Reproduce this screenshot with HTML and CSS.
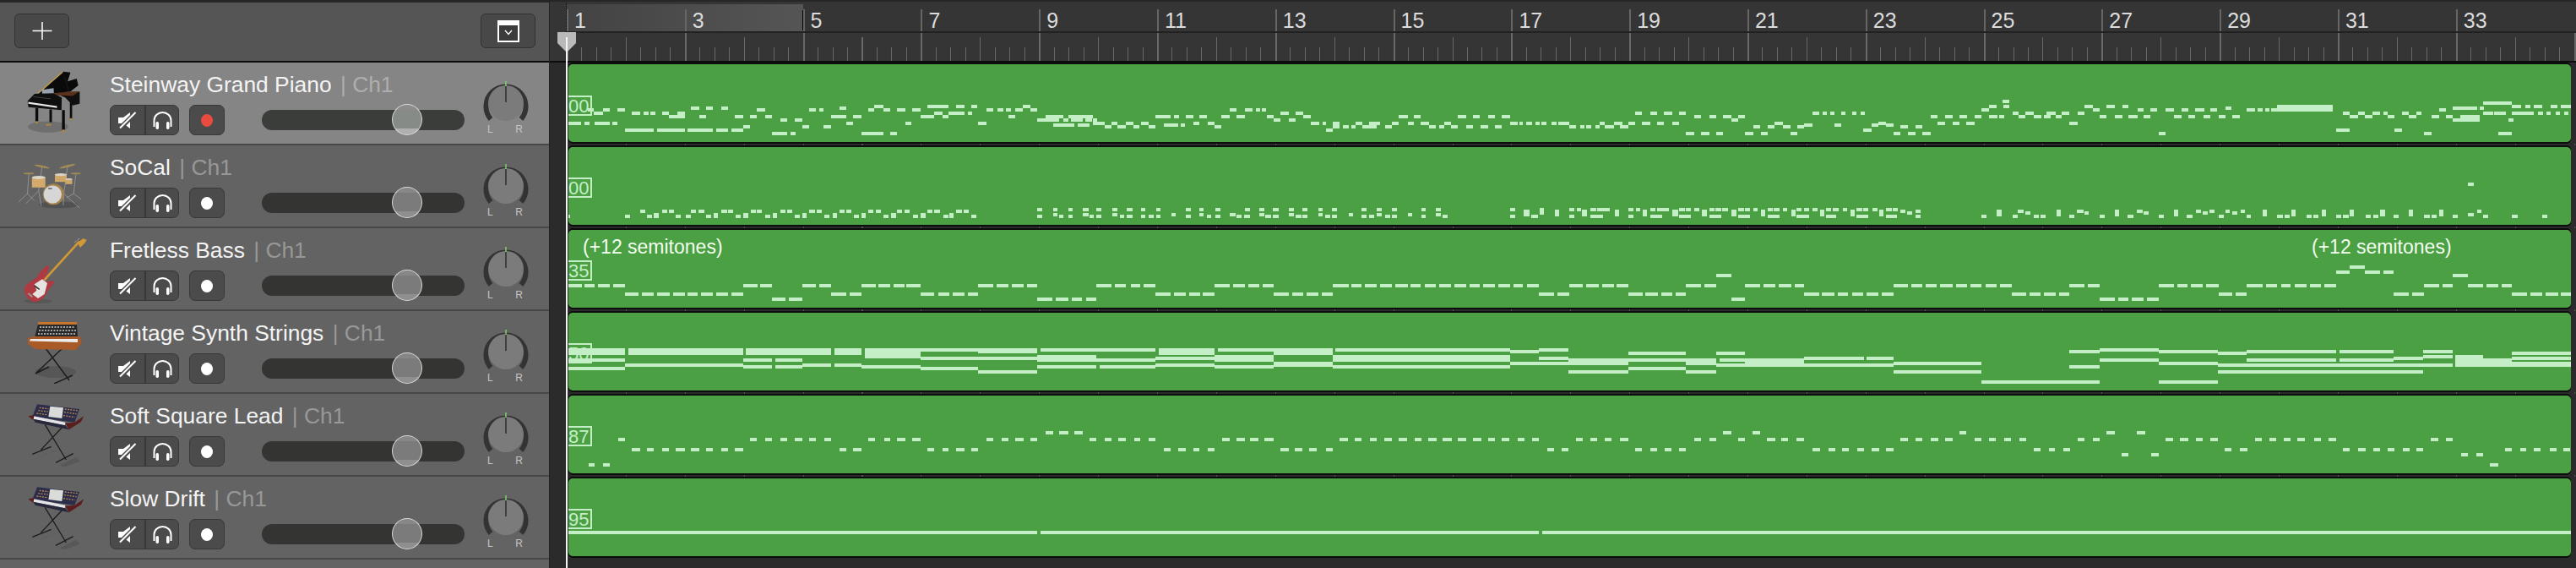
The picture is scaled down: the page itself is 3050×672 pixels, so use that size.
FILE: index.html
```html
<!DOCTYPE html>
<html lang="en">
<head>
    <meta charset="UTF-8">
    <title>Tracks</title>
    <link rel="stylesheet" href="styles.css">
</head>
<body>
    <svg class="sprite">
        <symbol id="i-mute" viewBox="0 0 22 21">
            <path class="ink" d="M0 7H6L14 1V20L6 14H0Z"/>
            <path class="gap" d="M1 21L22 0"/>
            <path class="line" d="M2 19.500L20.500 1"/>
        </symbol>
        <symbol id="i-solo" viewBox="0 0 23 21">
            <path class="line" d="M1.500 18V10.500a10 9.500 0 0 1 20 0V18"/>
            <rect class="ink" x="3.500" y="12" width="3.500" height="9" rx="1.700"/>
            <rect class="ink" x="16" y="12" width="3.500" height="9" rx="1.700"/>
        </symbol>
        <symbol id="i-pan" viewBox="0 0 54 52">
            <path class="pan-arc" d="M9 45A23.500 23.500 0 1 1 45 45"/>
            <circle class="pan-disc" cx="27" cy="26" r="21"/>
            <path class="pan-top" d="M27 0V6"/>
            <path class="pan-hand" d="M27 6V25"/>
        </symbol>
        <symbol id="i-synth" viewBox="0 0 270 270">
            <path d="M85 215L125 195L150 190L100 205ZM150 245L210 215L225 230L170 250Z" fill="#000" opacity=".1"/>
            <path d="M100 100L175 225M165 105L85 190M55 205L122 178M138 235L200 203" fill="none" stroke="#1c1c1c" stroke-width="4"/>
            <path d="M72 28L222 45L205 92L55 72Z" fill="#2c2d4a"/>
            <path d="M118 35L165 40L160 78L112 72Z" fill="#d9dcd8"/>
            <path d="M80 40L112 44M76 50L110 54M70 60L108 65M170 45L215 50M168 56L212 62M165 68L206 74" stroke="#b8864a" stroke-width="4" stroke-dasharray="6 4"/>
            <path d="M60 70L172 92L170 103L58 80Z" fill="#e4e4e8"/>
            <path d="M40 70L62 66L58 84Z" fill="#5a2020"/>
            <path d="M172 95L205 92L238 70L228 90L185 118Z" fill="#5b1e1c"/>
            <path d="M58 80L172 103L185 118L65 92Z" fill="#28283c"/>
        </symbol>
    </svg>

    <div class="app">
        <aside class="panel">
            <header class="panel-head">
                <button class="head-btn">
                    <svg class="head-plus" viewBox="0 0 24 22"><path d="M0 11H24M12 0V22"/></svg>
                </button>
                <button class="head-btn">
                    <svg class="head-win" viewBox="0 0 26 26">
                        <path class="win-body" d="M1 1H25V25H1Z"/>
                        <path class="win-bar" d="M0 0H26V6H0Z"/>
                        <path class="win-arrow" d="M9 12L13 16.500L17 12"/>
                    </svg>
                </button>
            </header>

            <div class="track selected">
                <div class="track-icon">
                    <svg class="icon-piano" viewBox="90 70 200 235">
                        <ellipse cx="170" cy="272" rx="72" ry="20" fill="#000" opacity=".16"/>
                        <path d="M125 205h10v48h-10zM175 210h9v45h-9zM220 212h10v72h-10zM248 185h8v58h-8z" fill="#0b0b0b"/>
                        <path d="M126 252h8v8h-8zM221 282h8v10h-8zM249 241h7v7h-7zM162 262h20v5h-20z" fill="#b08a3c"/>
                        <path d="M190 150L283 147V190L258 196L232 168Z" fill="#0f0f0f"/>
                        <path d="M185 148L282 146L258 162L205 160Z" fill="#5a3018"/>
                        <path d="M135 155L225 75L250 78L240 110L272 100L278 124L250 146L190 152Z" fill="#0a0a0a"/>
                        <path d="M135 152L222 77" stroke="#c39b45" stroke-width="4"/>
                        <path d="M228 90L245 148" stroke="#222" stroke-width="2"/>
                        <path d="M148 140L190 134L191 157L150 159Z" fill="#98a2ae"/>
                        <path d="M97 180L122 154L190 152L219 168L218 212L100 202Z" fill="#0e0e0e"/>
                        <path d="M99 183L202 198L202 205L100 190Z" fill="#e6e6e6"/>
                        <path d="M118 165L180 172" stroke="#555" stroke-width="2"/>
                    </svg>
                </div>
                <div class="track-main">
                    <div class="track-name">Steinway Grand Piano <span class="track-ch">| Ch1</span></div>
                    <div class="track-controls">
                        <div class="btn-group">
                            <div class="ctl-btn"><svg class="ic-mute"><use href="#i-mute"/></svg></div>
                            <div class="ctl-btn"><svg class="ic-solo"><use href="#i-solo"/></svg></div>
                        </div>
                        <div class="rec-btn"><span class="rec-dot on"></span></div>
                        <div class="fader"><span class="fader-thumb"></span></div>
                    </div>
                </div>
                <div class="pan">
                    <svg class="pan-knob"><use href="#i-pan"/></svg>
                    <div class="pan-labels"><span>L</span><span>R</span></div>
                </div>
            </div>

            <div class="track">
                <div class="track-icon">
                    <svg class="icon-drums" viewBox="70 395 240 175">
                        <ellipse cx="220" cy="550" rx="70" ry="12" fill="#000" opacity=".18"/>
                        <path d="M162 415L150 500L105 545M150 500L160 556M253 415L240 510L295 560M240 510L238 552M115 440L110 510L78 540M110 510L135 535M283 440L275 510L250 525M275 510L302 530" fill="none" stroke="#a8a8a8" stroke-width="2"/>
                        <ellipse cx="162" cy="413" rx="28" ry="4" fill="#a28c55" transform="rotate(12 162 413)"/>
                        <ellipse cx="253" cy="412" rx="29" ry="4" fill="#a28c55" transform="rotate(-14 253 412)"/>
                        <ellipse cx="115" cy="438" rx="19" ry="3" fill="#a28c55"/>
                        <ellipse cx="283" cy="438" rx="18" ry="3" fill="#a28c55"/>
                        <path d="M126 452h48v36h-48z" fill="#d3aa6c"/>
                        <ellipse cx="150" cy="452" rx="24" ry="6" fill="#d8d4c8"/>
                        <path d="M208 442h42v26h-42z" fill="#cfa76a"/>
                        <ellipse cx="229" cy="442" rx="21" ry="5" fill="#d8d4c8"/>
                        <path d="M246 458h24v18h-24z" fill="#cfa76a"/>
                        <ellipse cx="258" cy="458" rx="12" ry="3" fill="#d8d4c8"/>
                        <circle cx="203" cy="512" r="38" fill="#a3824c"/>
                        <circle cx="200" cy="513" r="32" fill="#d6d6d6"/>
                        <path d="M184 492h14" stroke="#555" stroke-width="4"/>
                    </svg>
                </div>
                <div class="track-main">
                    <div class="track-name">SoCal <span class="track-ch">| Ch1</span></div>
                    <div class="track-controls">
                        <div class="btn-group">
                            <div class="ctl-btn"><svg class="ic-mute"><use href="#i-mute"/></svg></div>
                            <div class="ctl-btn"><svg class="ic-solo"><use href="#i-solo"/></svg></div>
                        </div>
                        <div class="rec-btn"><span class="rec-dot"></span></div>
                        <div class="fader"><span class="fader-thumb"></span></div>
                    </div>
                </div>
                <div class="pan">
                    <svg class="pan-knob"><use href="#i-pan"/></svg>
                    <div class="pan-labels"><span>L</span><span>R</span></div>
                </div>
            </div>

            <div class="track">
                <div class="track-icon">
                    <svg class="icon-bass" viewBox="0 0 270 270">
                        <ellipse cx="75" cy="250" rx="50" ry="8" fill="#000" opacity=".12"/>
                        <path d="M112 124C100 128 85 140 75 160C65 175 40 180 28 200C22 220 35 245 60 252C75 255 100 240 108 215C115 205 130 190 134 182L125 178L100 180C102 165 110 145 115 130Z" fill="#b03a42"/>
                        <path d="M62 190L90 172L108 186L98 225L75 240L55 225L70 212Z" fill="#e6e2e0"/>
                        <path d="M62 195L80 208" stroke="#333" stroke-width="5"/>
                        <path d="M40 222L55 235" stroke="#999" stroke-width="6"/>
                        <path d="M97 175L222 38" stroke="#cf9a35" stroke-width="8"/>
                        <path d="M215 42L235 28L248 32L240 45L225 60Z" fill="#d09a35"/>
                        <path d="M205 42L212 35M215 34L222 27" stroke="#aaa" stroke-width="3"/>
                    </svg>
                </div>
                <div class="track-main">
                    <div class="track-name">Fretless Bass <span class="track-ch">| Ch1</span></div>
                    <div class="track-controls">
                        <div class="btn-group">
                            <div class="ctl-btn"><svg class="ic-mute"><use href="#i-mute"/></svg></div>
                            <div class="ctl-btn"><svg class="ic-solo"><use href="#i-solo"/></svg></div>
                        </div>
                        <div class="rec-btn"><span class="rec-dot"></span></div>
                        <div class="fader"><span class="fader-thumb"></span></div>
                    </div>
                </div>
                <div class="pan">
                    <svg class="pan-knob"><use href="#i-pan"/></svg>
                    <div class="pan-labels"><span>L</span><span>R</span></div>
                </div>
            </div>

            <div class="track">
                <div class="track-icon">
                    <svg class="icon-vintage" viewBox="0 0 70 76">
                        <ellipse cx="36" cy="62" rx="24" ry="7" fill="#000" opacity=".13"/>
                        <path d="M24 34L52 72M44 34L12 64M12 64L28 56M34 76L56 66" fill="none" stroke="#1d1d1d" stroke-width="1.500"/>
                        <path d="M15 3H61V6H15Z" fill="#c8752e"/>
                        <path d="M15 6H61L62 21H11Z" fill="#26272a"/>
                        <path d="M17 9h42M16 13h44M15 17h45" stroke="#a8a8a0" stroke-width="1.800" stroke-dasharray="2 1.500"/>
                        <path d="M3 22L11 20H64L67 27L60 36L12 35L3 29Z" fill="#a95a26"/>
                        <path d="M6 23H62L62 27L5 25.500Z" fill="#ececec"/>
                    </svg>
                </div>
                <div class="track-main">
                    <div class="track-name">Vintage Synth Strings <span class="track-ch">| Ch1</span></div>
                    <div class="track-controls">
                        <div class="btn-group">
                            <div class="ctl-btn"><svg class="ic-mute"><use href="#i-mute"/></svg></div>
                            <div class="ctl-btn"><svg class="ic-solo"><use href="#i-solo"/></svg></div>
                        </div>
                        <div class="rec-btn"><span class="rec-dot"></span></div>
                        <div class="fader"><span class="fader-thumb"></span></div>
                    </div>
                </div>
                <div class="pan">
                    <svg class="pan-knob"><use href="#i-pan"/></svg>
                    <div class="pan-labels"><span>L</span><span>R</span></div>
                </div>
            </div>

            <div class="track">
                <div class="track-icon">
                    <svg class="icon-synth"><use href="#i-synth"/></svg>
                </div>
                <div class="track-main">
                    <div class="track-name">Soft Square Lead <span class="track-ch">| Ch1</span></div>
                    <div class="track-controls">
                        <div class="btn-group">
                            <div class="ctl-btn"><svg class="ic-mute"><use href="#i-mute"/></svg></div>
                            <div class="ctl-btn"><svg class="ic-solo"><use href="#i-solo"/></svg></div>
                        </div>
                        <div class="rec-btn"><span class="rec-dot"></span></div>
                        <div class="fader"><span class="fader-thumb"></span></div>
                    </div>
                </div>
                <div class="pan">
                    <svg class="pan-knob"><use href="#i-pan"/></svg>
                    <div class="pan-labels"><span>L</span><span>R</span></div>
                </div>
            </div>

            <div class="track">
                <div class="track-icon">
                    <svg class="icon-synth"><use href="#i-synth"/></svg>
                </div>
                <div class="track-main">
                    <div class="track-name">Slow Drift <span class="track-ch">| Ch1</span></div>
                    <div class="track-controls">
                        <div class="btn-group">
                            <div class="ctl-btn"><svg class="ic-mute"><use href="#i-mute"/></svg></div>
                            <div class="ctl-btn"><svg class="ic-solo"><use href="#i-solo"/></svg></div>
                        </div>
                        <div class="rec-btn"><span class="rec-dot"></span></div>
                        <div class="fader"><span class="fader-thumb"></span></div>
                    </div>
                </div>
                <div class="pan">
                    <svg class="pan-knob"><use href="#i-pan"/></svg>
                    <div class="pan-labels"><span>L</span><span>R</span></div>
                </div>
            </div>
        </aside>

        <main class="arrange">
            <div class="ruler">
                <div class="ruler-bars">
                    <span class="bar">1</span><span class="bar">3</span><span class="bar">5</span><span class="bar">7</span><span class="bar">9</span><span class="bar">11</span><span class="bar">13</span><span class="bar">15</span><span class="bar">17</span><span class="bar">19</span><span class="bar">21</span><span class="bar">23</span><span class="bar">25</span><span class="bar">27</span><span class="bar">29</span><span class="bar">31</span><span class="bar">33</span>
                </div>
                <div class="ruler-ticks"></div>
            </div>

            <div class="lane">
                <div class="region">
                    <svg class="notes" viewBox="673 76 2371 92">
                        <path class="p1" d="M70 390h15M85 402h20M105 390h17M140 390h17M172 402h20M200 402h12M215 402h12M243 402h15M258 414h20M278 402h17M278 414h17M310 384h20M345 384h15M380 384h16M330 414h15M412 414h20M447 414h16M482 414h16M463 390h19M517 426h16M550 426h18M568 450h16M618 450h17M584 390h16M607 390h11M655 384h15M635 414h35M686 414h20M670 438h16M498 474h35M540 474h12M706 474h51M772 474h16M721 390h14M735 378h22M757 390h15M788 390h20M823 390h20M858 378h50M925 378h20M960 378h15M843 414h31M874 402h20M894 414h14M908 402h37M953 402h10M807 438h15M976 438h20M996 390h16M1022 390h12M1040 390h12M1062 390h18M1080 378h17M1097 390h16M1047 414h15M1113 426h52M1133 414h42M1175 426h10M1185 414h58M1192 426h28M1225 426h15M1243 426h10M1150 444h50M1207 444h28M1243 438h15M1258 438h12M1270 450h15M1285 438h15M1300 450h20M1320 438h17M1337 450h13M1355 438h17M1372 450h16M1407 444h33M1447 444h10M1475 438h15M1510 438h15M1525 450h15M1388 414h35M1430 414h13M1458 414h17M1490 414h18M1540 414h20M1560 390h8M26 438h29M62 438h12M86 438h36M128 438h12M157 462h66M231 462h64M302 462h58M368 462h28M404 462h28M432 450h15"/>
                        <path class="p4" d="M0 390h8M28 390h17M52 390h10M66 390h11M8 414h19M78 414h16M94 426h16M110 402h20M130 426h15M145 402h17M162 414h18M180 438h20M207 438h8M215 462h16M231 438h15M231 450h15M255 450h13M275 450h10M285 438h15M300 450h33M315 438h18M333 438h9M352 450h16M368 438h16M384 414h21M420 414h16M405 438h15M436 438h19M455 450h15M478 450h12M490 438h15M505 450h16M541 450h16M575 450h17M608 450h15M521 414h20M557 414h15M592 414h16M623 414h20M643 438h17M664 438h9M680 438h14M702 438h10M716 438h12M738 438h12M755 438h25M780 450h16M805 450h11M820 450h12M840 450h10M850 438h13M863 450h20M883 438h20M897 450h20M917 438h16M949 438h19M984 438h16M1019 438h16M933 402h16M968 402h16M1000 402h19M1035 402h16M1070 414h15M1105 414h17M1137 414h19M1156 426h16M1172 414h16M1051 474h19M1086 474h19M1122 474h15M1188 474h19M1225 474h15M1294 474h15M1207 450h16M1240 450h17M1257 438h18M1275 450h18M1310 450h15M1325 444h20M1345 402h15M1368 402h10M1385 402h10M1411 402h10M1436 402h10M1456 402h10M1396 444h15M1462 462h20M1482 444h15M1497 438h18M1515 444h18M1533 474h16"/>
                        <path class="p5" d="M0 450h17M35 450h15M17 474h18M50 474h21M71 414h16M103 414h19M138 414h17M172 414h16M86 438h17M122 438h15M153 438h19M188 390h17M205 378h18M205 414h20M230 414h12M240 378h12M238 360h14M260 402h15M275 414h15M290 402h20M310 414h17M340 402h20M333 414h15M360 414h15M375 402h17M412 402h16M392 438h20M428 378h18M446 390h17M463 414h15M478 378h20M498 414h17M515 378h15M530 414h20M550 390h15M565 414h15M580 390h16M615 390h20M635 414h17M652 390h16M668 414h17M685 390h20M703 414h17M720 390h15M738 414h16M754 384h14M770 414h18M804 390h20M830 390h10M846 390h10M860 390h14M874 378h130M874 390h130M600 474h15M1011 462h32M1028 402h15M1043 414h19M1062 402h16M1078 414h17M1095 402h18M1122 402h8M1130 414h16M1146 462h19M1165 402h15M1180 414h17M1197 402h13M1215 474h17M1232 414h18M1250 390h16M1266 414h16M1282 384h56M1282 426h18M1300 414h45M1300 426h45M1345 384h10M1352 366h68M1352 402h23M1378 402h27M1388 474h32M1412 426h10M1420 402h50M1420 378h20M1450 378h12M1470 378h20M1480 402h12M1500 402h10M1510 378h15M1520 402h10M1533 378h24M1540 402h10"/>
                    </svg>
                    <span class="region-num first">00</span>
                </div>
            </div>

            <div class="lane">
                <div class="region">
                    <svg class="notes" viewBox="673 174 2371 92">
                        <path class="p2" d="M26 258h4M157 258h12M192 240h12M208 258h12M223 252h12M223 258h12M243 240h12M258 240h12M275 258h12M298 258h12M310 240h12M327 240h14M345 258h12M362 252h10M362 258h10M380 240h13M396 240h12M413 258h12M432 252h10M432 258h10M448 240h12M463 240h12M482 258h12M500 252h10M500 258h10M517 240h12M533 240h12M550 258h12M568 252h10M568 258h10M585 240h12M601 240h12M620 258h12M638 252h10M638 258h10M655 240h12M670 240h12M688 258h12M706 252h10M706 258h10M722 240h12M738 240h12M757 258h12M775 252h10M775 258h10M788 240h12M806 240h12M825 258h12M843 252h12M843 258h12M859 240h12M875 240h12M895 258h12M910 252h10M910 258h10M926 240h12M942 240h12M960 258h12M1113 234h12M1113 258h12M1150 234h10M1150 252h10M1165 258h10M1185 234h11M1185 258h11M1220 234h12M1220 252h12M1235 258h10M1250 234h12M1250 258h12M1288 234h12M1288 252h12M1305 258h10M1322 234h12M1322 258h12M1355 234h10M1355 258h10M1372 258h12M1390 234h10M1390 258h10M1425 252h10M1458 234h12M1458 258h12M1490 234h10M1490 252h10M1508 258h10M1526 234h12M1526 258h12M1560 252h8"/>
                        <path class="p4" d="M0 762h5M8 768h12M25 768h15M28 744h12M60 744h12M60 762h12M75 768h13M92 744h13M92 768h13M130 744h12M130 762h12M145 768h13M160 744h12M160 768h12M197 744h11M197 762h11M213 768h12M230 744h12M230 768h12M268 762h10M298 744h12M298 768h12M315 768h12M333 744h12M333 762h12M352 768h13M368 744h12M368 768h12M405 762h10M437 744h10M437 768h10M470 744h12M470 762h12M487 768h11M643 744h12M643 768h12M675 750h12M675 762h12M692 768h16M712 744h10M712 756h10M746 750h11M746 762h11M780 744h12M780 768h12M798 744h10M810 750h12M810 762h12M830 744h12M830 768h28M845 744h15M860 744h15M885 750h10M885 762h10M917 744h13M917 768h13M935 744h10M950 750h10M950 762h10M968 744h12M968 768h27M983 744h14M997 744h15M1020 750h12M1020 762h12M1035 744h13M1035 768h27M1050 744h12M1070 744h12M1088 750h12M1088 762h12M1105 744h13M1105 768h27M1120 744h12M1135 744h13M1157 750h11M1157 762h11M1172 744h13M1172 768h28M1187 744h13M1207 744h11M1225 750h10M1225 762h10M1240 744h12M1240 768h28M1255 744h13M1275 744h10M1295 750h10M1295 762h10M1308 744h12M1308 768h28M1325 744h11M1345 744h12M1362 750h10M1362 762h10M1375 744h13M1375 768h25M1392 744h13M1415 744h10M1432 750h10M1432 762h10M1447 744h13M1447 768h26M1462 744h11M1483 744h12M1500 750h10M1500 762h10M1515 744h13M1515 768h25M1530 744h12"/>
                        <path class="p5" d="M0 750h12M15 756h12M35 750h12M35 768h12M188 768h12M223 750h12M223 762h12M260 768h12M272 750h15M290 756h12M310 768h12M325 768h12M362 750h10M362 762h10M392 768h12M410 750h15M428 756h10M463 768h12M498 750h10M498 762h10M528 768h12M548 750h14M565 756h12M600 768h12M635 750h10M635 762h10M665 768h13M686 750h12M702 756h12M718 750h12M738 768h12M755 750h10M770 756h12M790 750h10M804 768h10M840 750h10M840 762h10M874 768h14M892 768h12M908 750h10M908 762h10M943 768h12M958 768h12M978 750h10M978 762h10M1012 768h12M1028 768h12M1043 750h10M1043 762h10M1080 768h12M1098 768h12M1113 750h12M1113 762h12M1145 768h12M1180 750h10M1180 762h10M1215 768h13M1233 768h12M1250 750h10M1250 762h10M1282 768h12M1318 762h12M1338 750h10M1352 768h12M1420 768h12M1490 768h12M1318 654h12"/>
                    </svg>
                    <span class="region-num">00</span>
                </div>
            </div>

            <div class="lane">
                <div class="region">
                    <svg class="notes" viewBox="673 272 2371 92">
                        <path class="p2" d="M26 504h30M62 504h24M94 504h28M130 504h27M431 504h34M470 504h28M568 504h32M607 504h28M706 504h32M745 504h27M780 504h25M810 504h33M976 504h36M1020 504h26M1054 504h28M1090 504h23M1250 504h35M1293 504h27M1330 504h22M1360 504h28M1525 504h35M157 534h31M196 534h27M231 534h29M268 534h27M302 534h23M333 534h27M368 534h27M404 534h28M635 534h35M678 534h28M843 534h32M883 534h27M918 534h27M953 534h23M1388 534h35M1431 534h27M1467 534h25M1498 534h27M498 552h32M538 552h30M1113 552h35M1156 552h29M1193 552h25M1227 552h23"/>
                        <path class="p4" d="M0 1014h28M35 1014h25M68 1014h26M231 1014h37M275 1014h23M306 1014h27M341 1014h27M376 1014h29M412 1014h24M444 1014h26M478 1014h27M514 1014h27M549 1014h23M580 1014h28M615 1014h28M651 1014h22M682 1014h28M780 1014h32M820 1014h28M856 1014h27M890 1014h27M1051 1014h35M1094 1014h27M1188 1014h35M1231 1014h27M1266 1014h30M1304 1014h21M1533 1014h16M94 1044h36M137 1044h25M170 1044h27M205 1044h26M710 1044h35M753 1044h27M917 1044h33M957 1044h28M993 1044h27M1027 1044h24M1325 1044h35M1367 1044h29M1404 1044h23M1436 1044h26M1470 1044h27M1505 1044h28M1121 978h35M1156 1062h32"/>
                        <path class="p5" d="M0 1014h18M25 1014h25M58 1014h27M93 1014h29M130 1014h25M163 1014h25M197 1014h26M232 1014h27M392 1014h36M436 1014h27M600 1014h35M643 1014h24M675 1014h27M710 1014h28M804 1014h36M848 1014h27M883 1014h23M915 1014h27M950 1014h26M984 1014h27M1215 1014h35M1258 1014h24M1318 1014h34M1360 1014h28M1395 1014h25M259 1044h33M300 1044h25M333 1044h28M369 1044h23M738 1044h32M778 1044h26M1145 1044h35M1188 1044h27M1420 1044h35M1462 1044h28M1498 1044h28M1532 1044h25M463 1062h34M505 1062h25M538 1062h27M573 1062h27M1011 966h32M1078 966h35M1121 966h24M1043 948h35M1282 978h36"/>
                    </svg>
                    <span class="region-text">(+12 semitones)</span>
                    <span class="region-text late">(+12 semitones)</span>
                    <span class="region-num">35</span>
                </div>
            </div>

            <div class="lane">
                <div class="region">
                    <svg class="notes" viewBox="673 370 2371 92">
                        <path class="p3" d="M26 132h131M26 144h131M165 132h266M165 144h266M438 132h197M438 144h197M643 132h63M643 144h63M713 132h130M713 144h130M713 156h130M843 132h133M976 132h137M976 138h137M1121 132h267M1395 132h130M1395 144h130M1533 132h35M843 162h270M1113 156h137M1113 168h137M1250 168h138M1388 162h137M1525 156h43M1525 168h43M26 168h131M431 168h67M506 168h62M157 186h274M568 186h67M643 186h63M1388 186h137M1113 192h137M1258 192h130M1525 192h43M431 192h67M506 192h62M706 192h137M26 198h131M843 198h133M976 210h137"/>
                        <path class="p6" d="M0 132h47M47 132h69M47 144h69M119 132h204M323 138h34M357 132h35M462 144h67M564 144h34M0 156h47M0 168h47M116 156h207M116 168h207M47 180h69M47 186h69M0 192h47M116 192h207M323 180h69M357 162h35M392 168h70M392 180h70M462 168h67M529 168h35M529 180h35M568 168h30M598 168h69M598 180h69M564 186h103M667 162h70M740 162h31M667 186h104M771 180h103M462 198h67M392 210h70M529 210h35M771 210h103M874 246h138M1081 246h69M976 138h36M1012 132h69M1081 138h69M1150 144h33M1183 138h105M1292 138h63M1390 138h34M1493 144h69M1390 156h34M1355 162h35M1427 156h33M1427 168h33M1460 168h33M1493 162h69M1012 168h69M1183 168h105M1292 168h63M976 192h36M1081 180h69M1150 186h274M1427 180h135M1427 186h135M1150 210h240"/>
                    </svg>
                    <span class="region-num">50</span>
                </div>
            </div>

            <div class="lane">
                <div class="region">
                    <svg class="notes" viewBox="673 468 2371 92">
                        <path class="p3" d="M72 540h14M106 540h16M142 450h15M447 450h16M482 450h16M517 450h16M550 450h18M585 450h15M620 450h15M721 450h16M758 450h14M788 450h20M823 450h20M996 450h16M1031 450h15M1062 450h20M1098 450h15M1235 450h15M1270 450h15M1301 450h19M1338 450h14M1372 450h16M1542 450h18M172 486h20M207 486h16M243 486h15M274 486h21M310 486h19M345 486h15M380 486h16M412 486h19M655 486h15M686 486h20M858 486h17M894 486h14M925 486h20M960 486h16M1407 486h16M1440 486h18M1475 486h15M1510 486h15M1133 426h17M1165 426h20M1200 426h19"/>
                        <path class="p6" d="M4 450h10M20 450h10M36 450h11M124 450h10M142 450h8M160 450h8M177 450h8M193 450h10M212 450h8M228 450h10M245 450h10M262 450h10M280 450h10M298 450h8M314 450h8M332 450h8M349 450h8M400 450h8M417 450h8M434 450h8M452 450h10M538 450h8M556 450h8M590 450h8M623 450h10M640 450h8M658 450h9M779 450h9M797 450h8M815 450h8M831 450h9M866 450h8M883 450h8M900 450h8M918 450h8M986 450h8M1004 450h8M1089 450h9M1106 450h9M1124 450h8M1141 450h9M1193 450h8M1210 450h8M1227 450h8M1243 450h8M1262 450h8M1279 450h9M1398 450h9M1416 450h8M55 486h10M72 486h9M89 486h9M108 486h8M367 486h8M384 486h8M469 486h8M487 486h8M504 486h8M521 486h8M677 486h8M695 486h8M711 486h8M729 486h8M746 486h8M762 486h9M935 486h8M953 486h7M969 486h8M1158 486h8M1176 486h8M1296 486h8M1314 486h8M1331 486h8M1348 486h8M1366 486h8M1382 486h8M1485 486h8M1503 486h7M1519 486h8M1537 486h8M1553 486h8M572 426h10M607 426h8M848 426h8M1020 426h10M1055 426h10M1037 504h8M1072 504h9M1434 504h8M1452 504h8M1467 540h10"/>
                    </svg>
                    <span class="region-num">87</span>
                </div>
            </div>

            <div class="lane">
                <div class="region">
                    <svg class="notes" viewBox="673 566 2371 92">
                        <path class="p3" d="M26 780h1087M1121 780h447"/>
                        <path class="p6" d="M0 780h357M361 780h1201"/>
                    </svg>
                    <span class="region-num">95</span>
                </div>
            </div>
        </main>

        <svg class="playhead-cap" viewBox="0 0 24 24"><path d="M1 0H23V13L12 24L1 13Z"/></svg>
        <div class="playhead-dots"></div>
        <div class="playhead"></div>
    </div>
</body>
</html>
```

FILE: styles.css
```css
* {
    box-sizing: border-box;
    margin: 0;
    padding: 0;
    font-family: "Liberation Sans", Arial, sans-serif;
}

body {
    background-color: #2b2b2b;
    overflow: hidden;
}

.sprite {
    display: none;
}

.app {
    position: relative;
    display: flex;
    width: 3050px;
    height: 672px;
}

/* Left column */
.panel {
    width: 651px;
    flex-shrink: 0;
    background: #636363;
    border-right: 1px solid #222;
}

.panel-head {
    display: flex;
    justify-content: space-between;
    align-items: center;
    height: 74px;
    padding: 0 16px 2px 17px;
    background: #555;
    border-top: 3px solid #262626;
    border-bottom: 2px solid #0c0c0c;
}

.head-btn {
    display: flex;
    justify-content: center;
    align-items: center;
    width: 65px;
    height: 41px;
    background: #484848;
    border: 1px solid #333;
    border-radius: 6px;
}

.head-plus {
    width: 24px;
    height: 21px;
    fill: none;
    stroke: #fff;
    stroke-width: 1.6;
}

.head-win {
    width: 26px;
    height: 26px;
}

.win-body {
    fill: #3b3b3b;
    stroke: #fff;
    stroke-width: 2;
}

.win-bar {
    fill: #fff;
}

.win-arrow {
    fill: none;
    stroke: #fff;
    stroke-width: 1.3;
}

.track {
    display: flex;
    height: 98px;
    background: #636363;
    border-bottom: 2px solid #474747;
}

.track.selected {
    background: #858585;
}

.track-icon {
    display: flex;
    justify-content: center;
    align-items: center;
    width: 130px;
    padding: 0 30px 0 26px;
    flex-shrink: 0;
}

.icon-piano {
    width: 67px;
    height: 78px;
    flex-shrink: 0;
}

.icon-drums {
    width: 80px;
    height: 58px;
    flex-shrink: 0;
    margin-left: -8px;
}

.icon-bass,
.icon-synth {
    width: 90px;
    height: 90px;
    flex-shrink: 0;
    margin-left: 4px;
}

.icon-vintage {
    width: 70px;
    height: 76px;
    flex-shrink: 0;
    margin-left: 4px;
}

.track-main {
    width: 420px;
    flex-shrink: 0;
}

.track-name {
    height: 50px;
    padding-top: 11px;
    font-size: 26.400px;
    line-height: 30px;
    color: #f4f4f4;
    white-space: nowrap;
}

.track-ch {
    color: rgba(255, 255, 255, 0.35);
    margin-left: 3px;
}

.track-controls {
    display: flex;
    align-items: center;
    height: 36px;
}

.btn-group {
    display: flex;
    width: 82px;
    height: 36px;
    background: #4b4b4b;
    border: 1px solid #383838;
    border-radius: 7px;
}

.ctl-btn {
    display: flex;
    justify-content: center;
    align-items: center;
    width: 50%;
}

.ctl-btn + .ctl-btn {
    border-left: 2px solid #383838;
}

.ic-mute {
    width: 22px;
    height: 21px;
}

.ic-solo {
    width: 23px;
    height: 21px;
}

.ink {
    fill: #fff;
}

.line {
    fill: none;
    stroke: #fff;
    stroke-width: 2;
}

.gap {
    fill: none;
    stroke: #4b4b4b;
    stroke-width: 5.5;
}

.rec-btn {
    display: flex;
    justify-content: center;
    align-items: center;
    width: 42px;
    height: 36px;
    margin-left: 12px;
    background: #4b4b4b;
    border: 1px solid #383838;
    border-radius: 7px;
}

.rec-dot {
    width: 14px;
    height: 15px;
    background: #fff;
    border-radius: 50%;
}

.rec-dot.on {
    background: #ea4b3f;
}

.fader {
    position: relative;
    width: 240px;
    height: 24px;
    margin-left: 44px;
    background: #343432;
    border-radius: 12px;
}

.selected .fader {
    background: #3b3d3a;
}

.fader-thumb {
    position: absolute;
    left: 154px;
    top: -7px;
    width: 36px;
    height: 37px;
    border: 1px solid #d8d8d8;
    border-radius: 50%;
    background: linear-gradient(#878787 0 18%, #7b7b7b 18% 80%, #8f8f8f 80%);
}

.selected .fader-thumb {
    background: linear-gradient(#8c8c8c 0 18%, #878b87 18% 80%, #b0b0b0 80%);
}

.pan {
    width: 54px;
    margin-left: 22px;
    padding-top: 22px;
    flex-shrink: 0;
}

.pan-knob {
    display: block;
    width: 54px;
    height: 52px;
    overflow: hidden;
}

.pan-arc {
    fill: none;
    stroke: #333;
    stroke-width: 6;
}

.selected .pan-arc {
    stroke: #3c3c3c;
}

.pan-disc {
    fill: #7b7b7b;
}

.selected .pan-disc {
    fill: #bcbcbc;
}

.pan-top {
    stroke: #7fd06a;
    stroke-width: 1.5;
}

.pan-hand {
    stroke: #2e2e2e;
    stroke-width: 1.5;
}

.pan-labels {
    display: flex;
    justify-content: space-between;
    padding: 0 7px 0 5px;
    font-size: 12px;
    line-height: 10px;
    color: #c4c4c4;
}

/* Arrange area */
.arrange {
    flex: 1;
    min-width: 0;
}

.ruler {
    height: 74px;
    padding-top: 3px;
    background: #353535;
    border-top: 2px solid #262626;
    border-bottom: 2px solid #0c0c0c;
}

.ruler-bars {
    display: flex;
    height: 32px;
    padding-top: 6px;
    padding-left: 20px;
    background: linear-gradient(90deg, #434343, #555) 20px 0 / 280px 100% no-repeat;
}

.bar {
    flex: 0 0 139.8px;
    padding-left: 7px;
    font-size: 25px;
    line-height: 26px;
    color: #dcdcdc;
    border-left: 2px solid #666;
}

.bar:nth-child(3) {
    box-shadow: -2px 0 0 -1px #000;
}

.ruler-ticks {
    height: 35px;
    margin-left: 20px;
    border-top: 2px solid #222;
    background:
        repeating-linear-gradient(90deg, #686868 0 2px, transparent 2px 139.8px) 0 0 / 100% 100% no-repeat,
        repeating-linear-gradient(90deg, #686868 0 1px, transparent 1px 69.9px) 0 100% / 100% 28px no-repeat,
        repeating-linear-gradient(90deg, #686868 0 1px, transparent 1px 17.475px) 0 100% / 100% 16px no-repeat;
}

.lane {
    height: 98px;
    padding: 4px 6px 2px 22px;
    background: repeating-linear-gradient(90deg, #555 0 1px, transparent 1px 69.9px) 20px 0 / 100% 2px no-repeat;
}

.ruler + .lane {
    height: 96px;
    padding-top: 2px;
    background: none;
}

.region {
    position: relative;
    height: 92px;
    background: #4ca044;
    border-radius: 5px;
    box-shadow: 0 2px 0 #0c0c0c, 0 -2px 0 #0c0c0c;
    overflow: hidden;
}

.notes {
    display: block;
    width: 100%;
    height: 100%;
    fill: none;
    stroke: #c4eec6;
    stroke-width: 12;
    shape-rendering: crispEdges;
}

/* note rows were read off at a coarser grid, one class per stretch of the timeline */
.p1 { transform: translate(660px, 0) scale(0.5102, 0.3333); }
.p2 { transform: translate(660px, 170px) scale(0.5102, 0.3333); }
.p3 { transform: translate(660px, 370px) scale(0.5102, 0.3333); }
.p4 { transform: translate(1460px, 0) scale(0.5102, 0.3333); }
.p5 { transform: translate(2250px, 0) scale(0.5102, 0.3333); }
.p6 { transform: translate(1460px, 370px) scale(1.014, 0.3333); }

.region-num {
    position: absolute;
    left: 0;
    top: 36px;
    width: 28px;
    height: 24px;
    font-size: 22px;
    line-height: 21px;
    color: #c4eec6;
    border: 1px solid #c4eec6;
    border-width: 2px 2px 2px 0;
    white-space: nowrap;
    overflow: hidden;
}

.region-num.first {
    top: 37px;
}

.region-text {
    position: absolute;
    left: 17px;
    top: 6px;
    font-size: 23px;
    line-height: 28px;
    color: #f2fff0;
}

.region-text.late {
    left: 2064px;
}

/* Playhead */
.playhead-cap {
    position: absolute;
    left: 659px;
    top: 38px;
    width: 24px;
    height: 24px;
    fill: #b9b9b9;
}

.playhead-dots {
    position: absolute;
    left: 670px;
    top: 3px;
    height: 35px;
    border-left: 1px dotted #111;
}

.playhead {
    position: absolute;
    left: 670px;
    top: 44px;
    bottom: 0;
    width: 2px;
    background: #f4f4f4;
}
```
